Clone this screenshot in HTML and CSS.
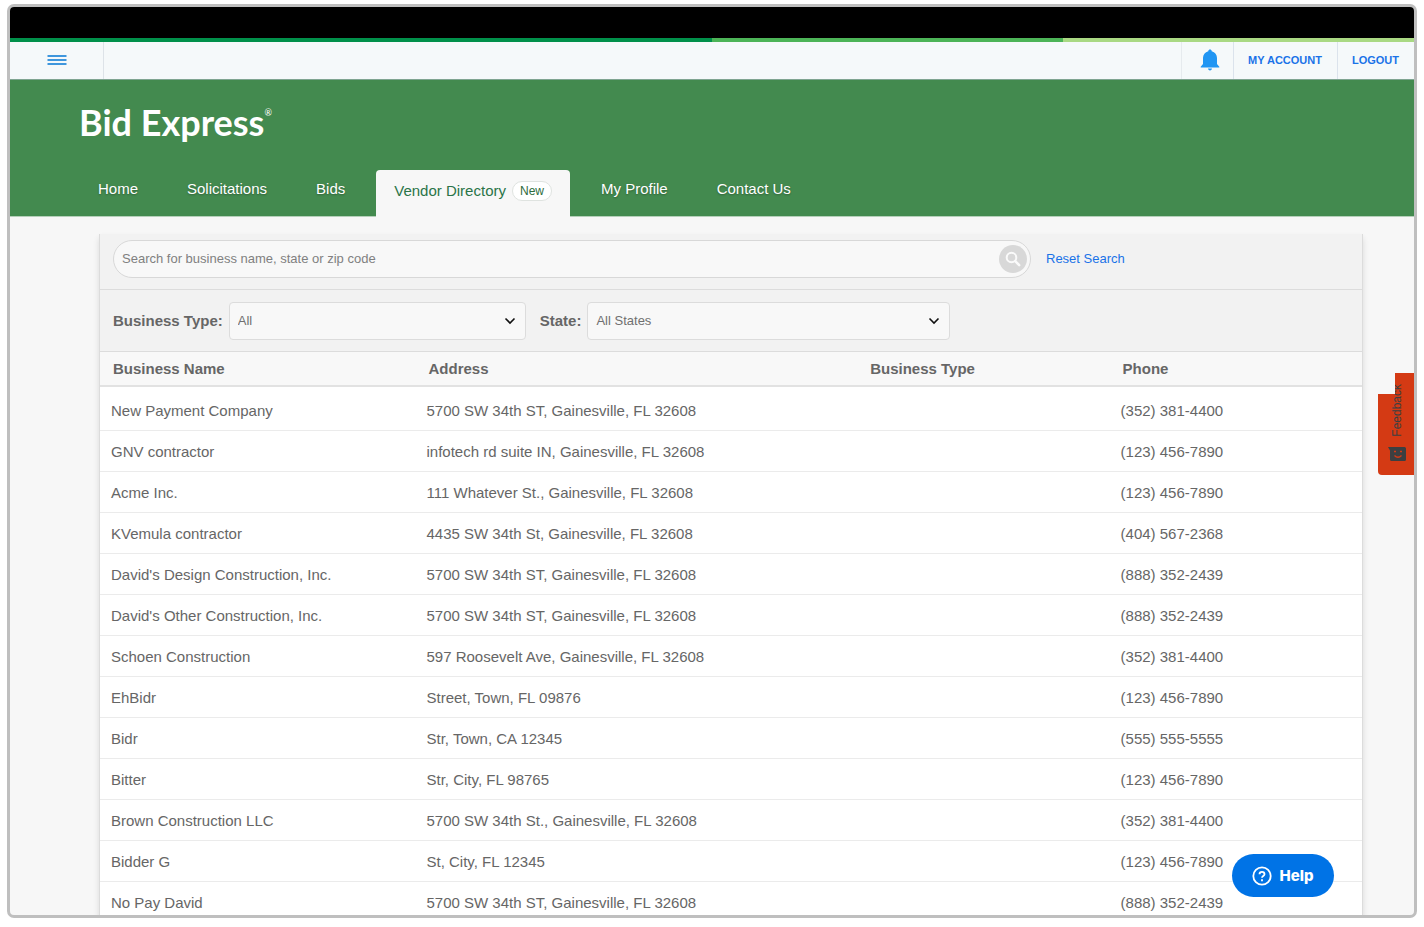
FILE: index.html
```
<!DOCTYPE html>
<html lang="en">
<head>
    <meta charset="UTF-8">
    <meta name="viewport" content="width=device-width, initial-scale=1.0">
    <title>Bid Express - Vendor Directory</title>
    <link rel="stylesheet" href="styles.css">
</head>
<body>

<div class="frame">
    <div class="black-bar"></div>
    <div class="stripe"></div>

    <div class="topbar">
        <button class="menu-button" aria-label="Menu">
            <svg width="20" height="12" viewBox="0 0 20 12"><path d="M0.500 2h19M0.500 6h19M0.500 10h19" stroke="#3f97dd" stroke-width="2"/></svg>
        </button>
        <button class="bell-button" aria-label="Notifications">
            <svg width="20" height="22" viewBox="0 0 20 22" fill="#2196f3"><path d="M10 0.500c-1 0-1.700.7-1.700 1.700C5 3 3 5.600 3 9v6l-2.300 2.800V18.500h18.600v-.7L17 15V9c0-3.400-2-6-5.300-6.800 0-1-.7-1.700-1.700-1.700zM8 19.600h4c0 1-.9 1.800-2 1.800s-2-.8-2-1.800z"/></svg>
        </button>
        <a class="topbar-link" href="#">MY ACCOUNT</a>
        <a class="topbar-link" href="#">LOGOUT</a>
    </div>

    <header class="header">
        <a class="logo" href="#">Bid Express<sup>®</sup></a>
        <nav class="nav">
            <a href="#">Home</a>
            <a href="#">Solicitations</a>
            <a href="#">Bids</a>
            <a class="active" href="#">Vendor Directory<span class="badge">New</span></a>
            <a href="#">My Profile</a>
            <a href="#">Contact Us</a>
        </nav>
    </header>

    <main class="card">
        <form class="search-row">
            <div class="search-box">
                <input type="text" aria-label="Search" placeholder="Search for business name, state or zip code">
                <button type="button" aria-label="Search">
                    <svg width="16" height="16" viewBox="0 0 16 16" fill="none" stroke="#fafafa" stroke-width="2"><circle cx="6.500" cy="6.500" r="4.800"/><path d="M10.200 10.200l4 4" stroke-width="2.400" stroke-linecap="round"/></svg>
                </button>
            </div>
            <a class="reset" href="#">Reset Search</a>
        </form>

        <div class="filter-row">
            <label for="type">Business Type:</label>
            <div class="select type-select">
                <select id="type"><option>All</option></select>
                <svg width="12" height="8" viewBox="0 0 12 8"><path d="M1.500 1.500L6 6l4.500-4.500" fill="none" stroke="#111" stroke-width="1.600"/></svg>
            </div>
            <label for="state">State:</label>
            <div class="select state-select">
                <select id="state"><option>All States</option></select>
                <svg width="12" height="8" viewBox="0 0 12 8"><path d="M1.500 1.500L6 6l4.500-4.500" fill="none" stroke="#111" stroke-width="1.600"/></svg>
            </div>
        </div>

        <table class="vendors">
            <thead>
                <tr>
                    <th class="col-name">Business Name</th>
                    <th class="col-address">Address</th>
                    <th class="col-type">Business Type</th>
                    <th class="col-phone">Phone</th>
                </tr>
            </thead>
            <tbody>
                <tr><td>New Payment Company</td><td>5700 SW 34th ST, Gainesville, FL 32608</td><td></td><td>(352) 381-4400</td></tr>
                <tr><td>GNV contractor</td><td>infotech rd suite IN, Gainesville, FL 32608</td><td></td><td>(123) 456-7890</td></tr>
                <tr><td>Acme Inc.</td><td>111 Whatever St., Gainesville, FL 32608</td><td></td><td>(123) 456-7890</td></tr>
                <tr><td>KVemula contractor</td><td>4435 SW 34th St, Gainesville, FL 32608</td><td></td><td>(404) 567-2368</td></tr>
                <tr><td>David's Design Construction, Inc.</td><td>5700 SW 34th ST, Gainesville, FL 32608</td><td></td><td>(888) 352-2439</td></tr>
                <tr><td>David's Other Construction, Inc.</td><td>5700 SW 34th ST, Gainesville, FL 32608</td><td></td><td>(888) 352-2439</td></tr>
                <tr><td>Schoen Construction</td><td>597 Roosevelt Ave, Gainesville, FL 32608</td><td></td><td>(352) 381-4400</td></tr>
                <tr><td>EhBidr</td><td>Street, Town, FL 09876</td><td></td><td>(123) 456-7890</td></tr>
                <tr><td>Bidr</td><td>Str, Town, CA 12345</td><td></td><td>(555) 555-5555</td></tr>
                <tr><td>Bitter</td><td>Str, City, FL 98765</td><td></td><td>(123) 456-7890</td></tr>
                <tr><td>Brown Construction LLC</td><td>5700 SW 34th St., Gainesville, FL 32608</td><td></td><td>(352) 381-4400</td></tr>
                <tr><td>Bidder G</td><td>St, City, FL 12345</td><td></td><td>(123) 456-7890</td></tr>
                <tr><td>No Pay David</td><td>5700 SW 34th ST, Gainesville, FL 32608</td><td></td><td>(888) 352-2439</td></tr>
            </tbody>
        </table>
    </main>

    <button class="feedback">
        <span>Feedback</span>
        <svg width="18" height="14" viewBox="0 0 18 14"><path d="M0 0h16.500q1.500 0 1.500 1.500v11q0 1.500-1.500 1.500h-13q-1.500 0-1.500-1.500V3.500z" fill="#3c3f41"/><path d="M6 4.500h2M12 4.500h2M6.500 8.500q3.500 3.500 7 0" stroke="#d43a14" stroke-width="1.400" fill="none"/></svg>
    </button>

    <button class="help">
        <svg width="20" height="20" viewBox="0 0 20 20" fill="none" stroke="#fff" stroke-width="1.800"><circle cx="10" cy="10" r="8.700"/><path d="M7.500 8.200c0-3.200 5-3.200 5 0 0 1.800-2.500 1.900-2.500 3.600"/><path d="M10 13.200v2"/></svg>
        Help
    </button>
</div>

</body>
</html>
```
FILE: styles.css
```
* {
    box-sizing: border-box;
}

body {
    margin: 0;
    padding: 4px 7px 9px;
    height: 100vh;
    background: #fff;
    font-family: "Liberation Sans", Arial, sans-serif;
    font-size: 15px;
    color: #666;
}

a {
    text-decoration: none;
}

button {
    padding: 0;
    border: none;
    background: none;
    font-family: inherit;
    cursor: pointer;
}

svg {
    display: block;
}

.frame {
    position: relative;
    height: 100%;
    overflow: hidden;
    border: 3px solid #bfbfbf;
    border-radius: 7px;
    background: #f7f7f7;
}

.black-bar {
    height: 31px;
    background: #000;
}

.stripe {
    height: 4px;
    background: linear-gradient(to right, #00904a 50%, #4cb457 50%, #4cb457 75%, #a9d983 75%);
}

/* account bar */
.topbar {
    display: flex;
    height: 38px;
    background: #f5f9fa;
    border-bottom: 1px solid #7fa591;
}

.menu-button {
    display: flex;
    align-items: center;
    justify-content: center;
    width: 94px;
    padding-bottom: 2px;
    border-right: 1px solid #dde3e8;
}

.bell-button {
    display: flex;
    align-items: center;
    justify-content: center;
    width: 52px;
    margin-left: auto;
    padding: 0 0 2px 5px;
    border-left: 1px solid #e6ebee;
}

.topbar-link {
    display: flex;
    align-items: center;
    padding: 0 15px 2px 14px;
    border-left: 1px solid #dbe3ec;
    font-size: 11px;
    font-weight: bold;
    color: #1a73e8;
}

/* green header */
.header {
    display: flex;
    flex-direction: column;
    justify-content: space-between;
    height: 137px;
    padding: 20px 69px 0;
    background: #438a4f;
    border-bottom: 1px solid #b5d0ba;
}

.logo {
    font-family: Lato, sans-serif;
    font-size: 36px;
    font-weight: bold;
    line-height: 44px;
    color: #fff;
}

.logo sup {
    font-size: 9px;
    font-weight: normal;
    line-height: 9px;
    vertical-align: 20px;
}

.nav {
    display: flex;
    gap: 13px;
    margin: 0 0 -1px 1px;
}

.nav a {
    height: 47px;
    padding: 0 18px;
    line-height: 37px;
    color: #fff;
    text-shadow: 0 1px 2px rgba(0, 0, 0, 0.3);
}

.nav .active {
    display: flex;
    align-items: center;
    gap: 6px;
    padding-bottom: 5px;
    background: #f7f7f7;
    border-radius: 4px 4px 0 0;
    line-height: 20px;
    color: #2a7448;
    text-shadow: none;
}

.badge {
    padding: 0 7px;
    border: 1px solid #dfe3e0;
    border-radius: 10px;
    background: #fff;
    font-size: 12px;
    line-height: 18px;
    color: #2d6b3c;
}

/* vendor list */
.card {
    margin: 17px 51px 0 89px;
    border: 1px solid #dcdcdc;
    border-top: none;
    background: #fff;
    box-shadow: 0 4px 6px rgba(0, 0, 0, 0.12);
}

.search-row,
.filter-row {
    display: flex;
    align-items: center;
    padding: 0 13px;
    background: #f2f2f2;
    border-bottom: 1px solid #dcdcdc;
}

.search-row {
    height: 56px;
    padding-bottom: 6px;
    gap: 15px;
}

.search-box {
    display: flex;
    align-items: center;
    flex: 0 1 918px;
    height: 38px;
    padding: 0 3px 0 8px;
    border: 1px solid #d8d8d8;
    border-radius: 19px;
    background: #f8f8f8;
}

.search-box input {
    flex: 1;
    padding: 0;
    border: none;
    outline: none;
    background: none;
    font-family: inherit;
    font-size: 13px;
}

.search-box input::placeholder {
    color: #808080;
}

.search-box button {
    display: flex;
    align-items: center;
    justify-content: center;
    width: 28px;
    height: 28px;
    border-radius: 50%;
    background: #d8d8d8;
}

.reset {
    font-size: 13px;
    color: #1a73e8;
}

.filter-row {
    height: 62px;
}

.filter-row label {
    margin-right: 6px;
    font-weight: bold;
}

.select {
    position: relative;
}

.select select {
    appearance: none;
    width: 100%;
    height: 38px;
    padding: 0 28px 0 8px;
    border: 1px solid #dcdcdc;
    border-radius: 4px;
    background-color: #f8f8f8;
    font-family: inherit;
    font-size: 13px;
    color: #707070;
}

.select svg {
    position: absolute;
    top: 15px;
    right: 10px;
    pointer-events: none;
}

.type-select {
    width: 297px;
    margin-right: 14px;
}

.state-select {
    width: 363px;
}

.vendors {
    width: 100%;
    table-layout: fixed;
    border-collapse: separate;
    border-spacing: 0;
    text-align: left;
}

.col-name {
    width: 25%;
}

.col-address {
    width: 35%;
}

.col-type,
.col-phone {
    width: 20%;
}

.vendors th {
    height: 35px;
    padding: 0 13px;
    background: #f8f8f8;
    border-bottom: 2px solid #e2e2e2;
}

.vendors td {
    height: 41px;
    padding: 0 11px;
    border-bottom: 1px solid #ebebeb;
}

.vendors tbody tr:first-child td {
    height: 44px;
    padding-top: 4px;
}

/* floating buttons */
.feedback {
    position: absolute;
    top: 366px;
    right: 0;
    display: flex;
    flex-direction: column;
    align-items: center;
    gap: 10px;
    width: 36px;
    height: 102px;
    padding: 11px 0 0 1px;
    border-radius: 4px 0 0 4px;
    background: #d43a14;
    color: #3c3f41;
    font-size: 12px;
    clip-path: polygon(17px 0, 100% 0, 100% 100%, 0 100%, 0 21px, 17px 21px);
}

.feedback span {
    writing-mode: vertical-rl;
    transform: rotate(180deg);
}

.help {
    position: absolute;
    right: 80px;
    bottom: 18px;
    display: flex;
    align-items: center;
    justify-content: center;
    gap: 7px;
    width: 102px;
    height: 43px;
    border-radius: 22px;
    background: #0073e6;
    font-family: Inter, sans-serif;
    font-size: 15px;
    font-weight: 800;
    color: #fff;
}
```
